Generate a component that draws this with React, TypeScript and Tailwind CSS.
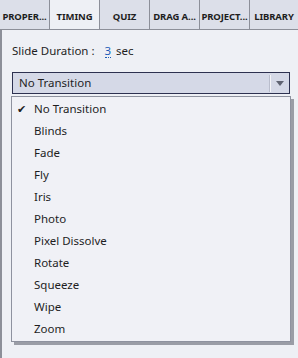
import { FC } from "react";

const tabs = ["PROPER...", "TIMING", "QUIZ", "DRAG A...", "PROJECT...", "LIBRARY"];

const transitions = [
  "No Transition",
  "Blinds",
  "Fade",
  "Fly",
  "Iris",
  "Photo",
  "Pixel Dissolve",
  "Rotate",
  "Squeeze",
  "Wipe",
  "Zoom",
];

const App: FC = () => {
  return (
    <div
      className="w-[298px] h-[358px] bg-[#eef0f5] text-[#1e1e1e] overflow-hidden"
      style={{ fontFamily: '"Noto Sans", "Open Sans", sans-serif' }}
    >
      <div className="flex h-[30px] border-b border-[#8c8f99]">
        {tabs.map((t, i) => (
          <div
            key={t}
            className={
              "flex items-center justify-center pt-[5px] text-[9.5px] font-bold tracking-[-0.1px] border-r border-[#8c8f99] " +
              (i === 5 ? "w-[48px] border-r-0 " : "w-[50px] ") +
              (i === 1 ? "bg-[#eef0f5]" : "bg-[#dcdfe9]")
            }
          >
            {t}
          </div>
        ))}
      </div>
      <div className="relative h-[328px] border-l-2 border-[#8c8f99] pl-[10px] pr-[8px] pt-[11px]">
        <div className="flex items-center h-[20px] text-[11.5px]">
          <span>Slide Duration :</span>
          <span className="ml-[10px] text-[#1c5bb8] border-b border-dotted border-[#1c5bb8] leading-[13px]">3</span>
          <span className="ml-[5px]">sec</span>
        </div>
        <div className="mt-[11px] flex items-center h-[22px] w-[278px] bg-[#d5d9e7] border border-[#2d3150] text-[11.5px]">
          <span className="pl-[6px] flex-1">No Transition</span>
          <div className="w-[2px] h-[17px] border-l border-r border-l-[#b9bdcc] border-r-[#f4f5f9]" />
          <div className="w-[18px] flex justify-center">
            <div className="w-0 h-0 border-l-[4px] border-r-[4px] border-t-[5px] border-l-transparent border-r-transparent border-t-[#5f6372]" />
          </div>
        </div>
        <div className="absolute left-[9px] top-[66px] w-[280px] bg-[#f0f1f6] border border-[#8e929f] shadow-[3px_3px_0_0_#9a9da6] py-[1px]">
          {transitions.map((t, i) => (
            <div key={t} className="flex items-center h-[22px] text-[11.5px]">
              <span className="w-[22px] pl-[5px] text-[11px]">{i === 0 ? "✔" : ""}</span>
              <span>{t}</span>
            </div>
          ))}
        </div>
      </div>
    </div>
  );
};

export default App;
